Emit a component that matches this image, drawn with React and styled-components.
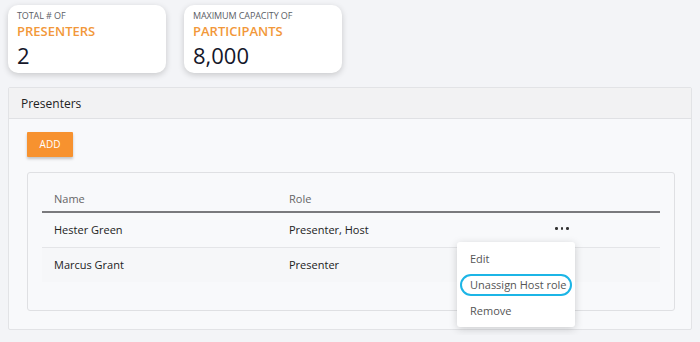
import React from "react";
import styled, { createGlobalStyle } from "styled-components";

const GlobalStyle = createGlobalStyle`
  body {
    margin: 0;
    background: #f3f4f7;
    font-family: "Open Sans", "Noto Sans", sans-serif;
    color: #222;
  }
`;

const presenters = [
  { name: "Hester Green", role: "Presenter, Host", menu: true },
  { name: "Marcus Grant", role: "Presenter" },
];

const App = () => {
  return (
    <Page>
      <GlobalStyle />
      <StatRow>
        <StatCard>
          <StatLabel>TOTAL # OF</StatLabel>
          <StatTitle>PRESENTERS</StatTitle>
          <StatValue>2</StatValue>
        </StatCard>
        <StatCard>
          <StatLabel>MAXIMUM CAPACITY OF</StatLabel>
          <StatTitle>PARTICIPANTS</StatTitle>
          <StatValue>8,000</StatValue>
        </StatCard>
      </StatRow>

      <Panel>
        <PanelHeader>Presenters</PanelHeader>
        <PanelBody>
          <AddButton>ADD</AddButton>
          <TableBox>
            <HeadRow>
              <NameCell>Name</NameCell>
              <RoleCell>Role</RoleCell>
              <ActionCell />
            </HeadRow>
            {presenters.map((p, i) => (
              <Row key={p.name} shaded={i % 2 === 1}>
                <NameCell>{p.name}</NameCell>
                <RoleCell>{p.role}</RoleCell>
                <ActionCell>
                  {p.menu && (
                    <>
                      <Dots>
                        <Dot />
                        <Dot />
                        <Dot />
                      </Dots>
                      <Menu>
                        <MenuItem>Edit</MenuItem>
                        <MenuItem focused>Unassign Host role</MenuItem>
                        <MenuItem>Remove</MenuItem>
                      </Menu>
                    </>
                  )}
                </ActionCell>
              </Row>
            ))}
          </TableBox>
        </PanelBody>
      </Panel>
    </Page>
  );
};

const Page = styled.div`
  padding: 5px 8px;
`;

const StatRow = styled.div`
  display: flex;
  gap: 18px;
`;

const StatCard = styled.div`
  width: 158px;
  height: 68px;
  box-sizing: border-box;
  padding: 4px 9px 0;
  background: #fff;
  border-radius: 10px;
  box-shadow: 0 2px 6px rgba(0, 0, 0, 0.18);
`;

const StatLabel = styled.div`
  font-size: 9px;
  line-height: 13px;
  color: #5b5e66;
  letter-spacing: -0.1px;
`;

const StatTitle = styled.div`
  font-size: 13px;
  line-height: 18px;
  font-weight: 600;
  color: #f2983a;
`;

const StatValue = styled.div`
  margin-top: 2px;
  font-size: 22px;
  line-height: 26px;
  color: #15172a;
`;

const Panel = styled.div`
  margin-top: 14px;
  background: #f8f9fb;
  border: 1px solid #e2e3e6;
  border-radius: 2px;
`;

const PanelHeader = styled.div`
  height: 30px;
  display: flex;
  align-items: center;
  padding-left: 12px;
  font-size: 12px;
  color: #222;
  background: #f2f2f3;
  border-bottom: 1px solid #e0e1e4;
`;

const PanelBody = styled.div`
  padding: 12px 16px 18px 18px;
`;

const AddButton = styled.button`
  width: 46px;
  height: 25px;
  border: none;
  border-radius: 1px;
  background: #f7922f;
  color: #fff;
  font-family: inherit;
  font-size: 10px;
  box-shadow: 0 2px 3px rgba(0, 0, 0, 0.22);
  padding: 0;
`;

const TableBox = styled.div`
  margin-top: 15px;
  border: 1px solid #dfe0e3;
  border-radius: 3px;
  padding: 14px 14px 28px;
`;

const HeadRow = styled.div`
  display: grid;
  grid-template-columns: 235px 1fr 140px;
  height: 24px;
  align-items: center;
  font-size: 11px;
  color: #666;
  border-bottom: 2px solid #7a7a7d;
`;

const Row = styled.div`
  display: grid;
  grid-template-columns: 235px 1fr 140px;
  height: 34px;
  align-items: center;
  font-size: 11px;
  color: #222;
  background: ${(p) => (p.shaded ? "#f6f7f9" : "transparent")};
  border-bottom: ${(p) => (p.shaded ? "none" : "1px solid #e4e5e8")};
`;

const NameCell = styled.div`
  padding-left: 12px;
`;

const RoleCell = styled.div`
  padding-left: 12px;
`;

const ActionCell = styled.div`
  position: relative;
  height: 100%;
  display: flex;
  align-items: center;
`;

const Dots = styled.span`
  display: flex;
  gap: 3px;
  margin-left: 35px;
  margin-top: -2px;
`;

const Dot = styled.span`
  width: 2.5px;
  height: 2.5px;
  border-radius: 50%;
  background: #333;
`;

const Menu = styled.div`
  position: absolute;
  top: 29px;
  left: -63px;
  width: 118px;
  padding: 2px 0 1px;
  background: #fff;
  border-radius: 3px;
  box-shadow: 0 2px 8px rgba(0, 0, 0, 0.18);
  z-index: 2;
`;

const MenuItem = styled.div`
  height: 22px;
  margin: 4px 3px;
  padding-left: 8px;
  display: flex;
  align-items: center;
  font-size: 11px;
  color: #555;
  border-radius: 12px;
  box-sizing: border-box;
  border: 2.5px solid ${(p) => (p.focused ? "#1cb5e6" : "transparent")};
`;

export default App;
